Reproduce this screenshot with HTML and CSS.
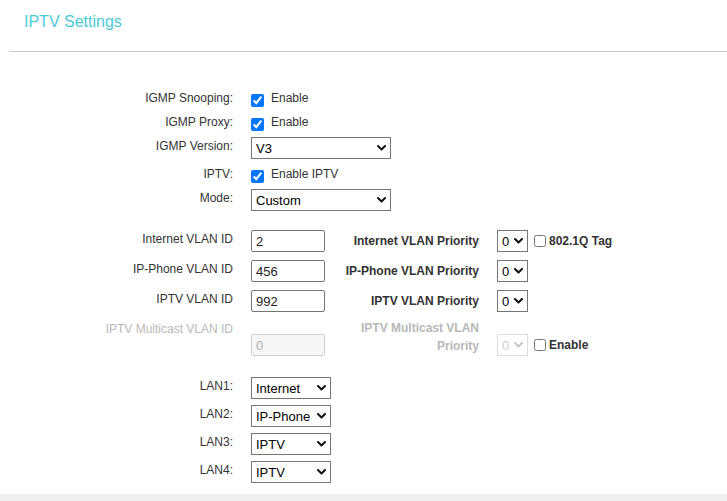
FILE: index.html
```html
<!DOCTYPE html>
<html lang="en">
<head>
<meta charset="utf-8">
<title>IPTV Settings</title>
<link rel="stylesheet" href="styles.css">
</head>
<body>
<div class="page">
  <div class="head"><h1 class="title">IPTV Settings</h1></div>
  <div class="rule"></div>

  <div class="sec sec-igmp">
    <div class="row cbrow">
      <label class="lbl">IGMP Snooping:</label>
      <span class="ctl"><input type="checkbox" class="cb" checked><span class="cbtxt">Enable</span></span>
    </div>
    <div class="row cbrow">
      <label class="lbl">IGMP Proxy:</label>
      <span class="ctl"><input type="checkbox" class="cb" checked><span class="cbtxt">Enable</span></span>
    </div>
    <div class="row">
      <label class="lbl">IGMP Version:</label>
      <span class="sel sel-wide"><select><option>V3</option><option>V2</option></select><svg class="chev" width="9" height="6" viewBox="0 0 9 6"><polyline points="1,1 4.5,4.5 8,1"/></svg></span>
    </div>
    <div class="row cbrow">
      <label class="lbl">IPTV:</label>
      <span class="ctl"><input type="checkbox" class="cb" checked><span class="cbtxt">Enable IPTV</span></span>
    </div>
    <div class="row">
      <label class="lbl">Mode:</label>
      <span class="sel sel-wide"><select><option>Custom</option></select><svg class="chev" width="9" height="6" viewBox="0 0 9 6"><polyline points="1,1 4.5,4.5 8,1"/></svg></span>
    </div>
  </div>

  <div class="sec sec-vlan">
    <div class="row vrow">
      <label class="lbl">Internet VLAN ID</label>
      <input type="text" class="txt" value="2">
      <label class="rlbl">Internet VLAN Priority</label>
      <span class="grp">
        <span class="sel sel-pri"><select><option>0</option></select><svg class="chev" width="9" height="6" viewBox="0 0 9 6"><polyline points="1,1 4.5,4.5 8,1"/></svg></span>
        <input type="checkbox" class="cb cb-s"><span class="btxt">802.1Q Tag</span>
      </span>
    </div>
    <div class="row vrow">
      <label class="lbl">IP-Phone VLAN ID</label>
      <input type="text" class="txt" value="456">
      <label class="rlbl">IP-Phone VLAN Priority</label>
      <span class="grp">
        <span class="sel sel-pri"><select><option>0</option></select><svg class="chev" width="9" height="6" viewBox="0 0 9 6"><polyline points="1,1 4.5,4.5 8,1"/></svg></span>
      </span>
    </div>
    <div class="row vrow">
      <label class="lbl">IPTV VLAN ID</label>
      <input type="text" class="txt" value="992">
      <label class="rlbl">IPTV VLAN Priority</label>
      <span class="grp">
        <span class="sel sel-pri"><select><option>0</option></select><svg class="chev" width="9" height="6" viewBox="0 0 9 6"><polyline points="1,1 4.5,4.5 8,1"/></svg></span>
      </span>
    </div>
    <div class="row mrow">
      <label class="lbl dis">IPTV Multicast VLAN ID</label>
      <input type="text" class="txt txt-dis" value="0" disabled>
      <label class="rlbl rlbl-2 dis">IPTV Multicast VLAN Priority</label>
      <span class="grp grp-end">
        <span class="sel sel-pri sel-dis"><select disabled><option>0</option></select><svg class="chev" width="9" height="6" viewBox="0 0 9 6"><polyline points="1,1 4.5,4.5 8,1"/></svg></span>
        <input type="checkbox" class="cb cb-s"><span class="btxt">Enable</span>
      </span>
    </div>
  </div>

  <div class="sec sec-lan">
    <div class="row">
      <label class="lbl">LAN1:</label>
      <span class="sel sel-lan"><select><option>Internet</option></select><svg class="chev" width="9" height="6" viewBox="0 0 9 6"><polyline points="1,1 4.5,4.5 8,1"/></svg></span>
    </div>
    <div class="row">
      <label class="lbl">LAN2:</label>
      <span class="sel sel-lan"><select><option>IP-Phone</option></select><svg class="chev" width="9" height="6" viewBox="0 0 9 6"><polyline points="1,1 4.5,4.5 8,1"/></svg></span>
    </div>
    <div class="row">
      <label class="lbl">LAN3:</label>
      <span class="sel sel-lan"><select><option>IPTV</option></select><svg class="chev" width="9" height="6" viewBox="0 0 9 6"><polyline points="1,1 4.5,4.5 8,1"/></svg></span>
    </div>
    <div class="row">
      <label class="lbl">LAN4:</label>
      <span class="sel sel-lan"><select><option>IPTV</option></select><svg class="chev" width="9" height="6" viewBox="0 0 9 6"><polyline points="1,1 4.5,4.5 8,1"/></svg></span>
    </div>
  </div>
</div>
<div class="foot"></div>
</body>
</html>
```

FILE: styles.css
```css
html, body {
  margin: 0;
  padding: 0;
  overflow: hidden;
  background: #fff;
}
body {
  font-family: "Liberation Sans", Arial, sans-serif;
  font-size: 12px;
  color: #333;
  width: 727px;
  height: 501px;
}
.page {
  height: 494px;
}
.head {
  height: 51px;
  box-sizing: border-box;
  padding: 13px 0 0 24px;
}
.title {
  margin: 0;
  font-size: 16px;
  line-height: 18px;
  font-weight: normal;
  color: #4acbd6;
}
.rule {
  margin-left: 9px;
  border-top: 1px solid #cccccc;
}
.sec {
  display: flex;
  flex-direction: column;
}
.sec-igmp {
  margin-top: 37px;
  gap: 6px;
}
.sec-vlan {
  margin-top: 19px;
  gap: 8px;
}
.sec-lan {
  margin-top: 21px;
  gap: 6px;
}
.row {
  display: flex;
  align-items: flex-start;
  min-height: 22px;
}
.cbrow {
  min-height: 18px;
}
.lbl {
  flex: none;
  width: 233px;
  margin-right: 18px;
  text-align: right;
  line-height: 16px;
  padding-top: 1px;
}
.dis {
  color: #b8b8b8;
}
.ctl {
  display: flex;
  align-items: flex-start;
}
.cb {
  margin: 5px 0 0 0;
  width: 13px;
  height: 13px;
  accent-color: #0075ff;
  flex: none;
}
.cbtxt {
  margin-left: 7px;
  line-height: 16px;
  padding-top: 1px;
}
.sel {
  position: relative;
  display: inline-block;
  flex: none;
}
.sel select {
  -webkit-appearance: none;
  appearance: none;
  display: block;
  height: 22px;
  margin: 0;
  padding: 0 4px;
  border: 1px solid #767676;
  border-radius: 0;
  background: #fff;
  font-family: "Liberation Sans", Arial, sans-serif;
  font-size: 13px;
  color: #000;
  outline: none;
}
.chev {
  position: absolute;
  right: 5px;
  top: 50%;
  margin-top: -3px;
  pointer-events: none;
}
.chev polyline {
  fill: none;
  stroke: #111;
  stroke-width: 2;
  stroke-linecap: round;
  stroke-linejoin: round;
}
.sel-wide select {
  width: 140px;
}
.sel-lan select {
  width: 80px;
}
.sel-pri select {
  width: 31px;
}
.sel-dis select {
  border-color: #cfcfcf;
  color: #b8b8b8;
  background: #fff;
}
.sel-dis .chev polyline {
  stroke: #c4c4c4;
}
.txt {
  flex: none;
  box-sizing: border-box;
  width: 74px;
  height: 22px;
  margin: 0;
  padding: 0 4px;
  border: 1px solid #767676;
  border-radius: 2px;
  font-family: "Liberation Sans", Arial, sans-serif;
  font-size: 13px;
  color: #222;
  background: #fff;
  outline: none;
}
.txt-dis {
  align-self: flex-end;
  background: #f6f6f6;
  border-color: #d2d2d2;
  color: #b0b0b0;
}
.rlbl {
  flex: none;
  width: 154px;
  margin-right: 18px;
  text-align: right;
  font-weight: bold;
  line-height: 16px;
  align-self: center;
}
.rlbl-2 {
  align-self: flex-start;
  line-height: 18px;
  margin-top: -1px;
}
.grp {
  display: flex;
  align-items: center;
}
.grp-end {
  align-self: flex-end;
}
.cb-s {
  margin: 0 0 0 6px;
  width: 12px;
  height: 12px;
}
.btxt {
  margin-left: 3px;
  font-weight: bold;
  line-height: 16px;
}
.mrow {
  min-height: 36px;
}
.foot {
  height: 7px;
  background: #f0f0f0;
}
```
